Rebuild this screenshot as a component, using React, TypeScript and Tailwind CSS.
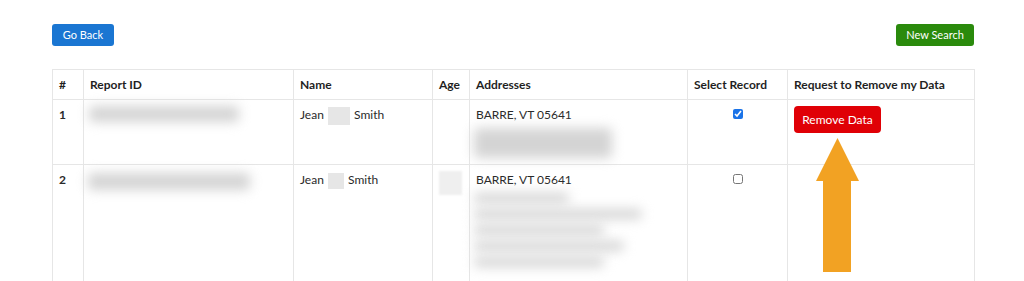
import React from 'react';

const Blur = ({ className }: { className: string }) => (
  <div className={`bg-[#d4d4d4] blur-[6px] rounded ${className}`} />
);

const Gap = ({ className }: { className: string }) => (
  <span className={`inline-block bg-[#e6e6e6] align-middle ${className}`} />
);

const Arrow = () => (
  <svg className="absolute left-[815px] top-[138px]" width="45" height="134" viewBox="0 0 45 134">
    <polygon points="22.5,0 44,43 36,43 36,134 8,134 8,43 1,43" fill="#f2a223" />
  </svg>
);

export default function App() {
  const th = 'border border-[#e6e6e6] px-[6px] text-left font-bold text-[12px] text-[#1f1f1f]';
  const td = 'border border-[#e6e6e6] px-[6px] pt-[6px] align-top text-[12px] text-[#2a2a2a]';

  return (
    <div className="relative w-[1024px] h-[281px] overflow-hidden bg-white font-['Lato',_'Noto_Sans',_sans-serif]">
      <div className="ml-[52px] w-[922px] pt-[24px]">
        <div className="flex justify-between">
          <button className="h-[22px] w-[62px] rounded-[3px] bg-[#1a76d2] text-[11px] text-white">Go Back</button>
          <button className="h-[22px] w-[78px] rounded-[3px] bg-[#2a8a0c] text-[11px] text-white">New Search</button>
        </div>

        <table className="mt-[23px] w-[922px] table-fixed border-collapse">
          <colgroup>
            <col className="w-[31px]" />
            <col className="w-[210px]" />
            <col className="w-[139px]" />
            <col className="w-[37px]" />
            <col className="w-[218px]" />
            <col className="w-[100px]" />
            <col className="w-[187px]" />
          </colgroup>
          <thead>
            <tr className="h-[30px]">
              <th className={th}>#</th>
              <th className={th}>Report ID</th>
              <th className={th}>Name</th>
              <th className={th}>Age</th>
              <th className={th}>Addresses</th>
              <th className={`${th} text-center`}>Select Record</th>
              <th className={th}>Request to Remove my Data</th>
            </tr>
          </thead>
          <tbody>
            <tr className="h-[65px]">
              <td className={`${td} font-bold`}>1</td>
              <td className={td}>
                <Blur className="ml-[-1px] h-[16px] w-[150px]" />
              </td>
              <td className={td}>
                Jean <Gap className="mx-[1px] h-[18px] w-[22px]" /> Smith
              </td>
              <td className={td}></td>
              <td className={td}>
                <div>BARRE, VT 05641</div>
                <Blur className="ml-[-2px] mt-[4px] h-[30px] w-[138px]" />
              </td>
              <td className={`${td} text-center`}>
                <input type="checkbox" defaultChecked className="h-[10px] w-[10px] accent-[#1a73e8]" />
              </td>
              <td className={`${td} pt-[6px]`}>
                <button className="h-[27px] w-[87px] rounded-[4px] bg-[#e00006] text-[12px] text-white">Remove Data</button>
              </td>
            </tr>
            <tr className="h-[130px]">
              <td className={`${td} font-bold`}>2</td>
              <td className={td}>
                <Blur className="mt-[2px] ml-[-2px] h-[17px] w-[162px]" />
              </td>
              <td className={td}>
                Jean <Gap className="mx-[1px] h-[16px] w-[16px]" /> Smith
              </td>
              <td className={`${td} px-[3px] pt-[4px]`}>
                <div className="h-[24px] w-[23px] bg-[#efefef] blur-[1px]" />
              </td>
              <td className={td}>
                <div>BARRE, VT 05641</div>
                <div className="ml-[-2px] mt-[4px] flex flex-col gap-[6px]">
                  <Blur className="h-[10px] w-[95px]" />
                  <Blur className="h-[10px] w-[168px]" />
                  <Blur className="h-[10px] w-[130px]" />
                  <Blur className="h-[10px] w-[150px]" />
                  <Blur className="h-[10px] w-[130px]" />
                </div>
              </td>
              <td className={`${td} text-center`}>
                <input type="checkbox" className="h-[10px] w-[10px]" />
              </td>
              <td className={td}></td>
            </tr>
          </tbody>
        </table>
      </div>
      <Arrow />
    </div>
  );
}
